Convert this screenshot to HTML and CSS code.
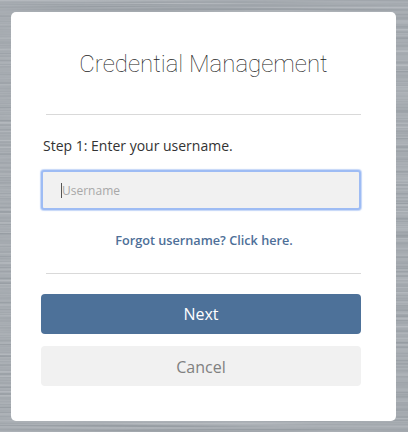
FILE: index.html
```html
<!DOCTYPE html>
<html lang="en">
<head>
  <meta charset="UTF-8" />
  <meta name="viewport" content="width=device-width, initial-scale=1" />
  <title>Credential Management</title>
  <link rel="stylesheet" href="styles.css">
</head>
<body>

  <svg class="metal" xmlns="http://www.w3.org/2000/svg" width="408" height="432">
    <filter id="brushed" x="0" y="0" width="100%" height="100%">
      <feTurbulence type="fractalNoise" baseFrequency="0.003 0.45" numOctaves="3" seed="4" />
      <feColorMatrix type="matrix" values="0 0 0 0 0.66  0 0 0 0 0.68  0 0 0 0 0.71  0.9 0 0 0 -0.2" />
    </filter>
    <rect width="408" height="432" fill="#979da3" />
    <rect width="408" height="432" filter="url(#brushed)" />
  </svg>

  <div class="card">
    <h1 class="title">Credential Management</h1>
    <hr class="rule">
    <p class="step">Step 1: Enter your username.</p>
    <div class="field">
      <input class="field__input" type="text" placeholder="Username">
      <span class="field__caret"></span>
    </div>
    <a class="forgot" href="#">Forgot username? Click here.</a>
    <hr class="rule">
    <button class="btn btn--next" type="button">Next</button>
    <button class="btn btn--cancel" type="button">Cancel</button>
  </div>

</body>
</html>
```

FILE: styles.css
```css
html, body {
  margin: 0;
  padding: 0;
  height: 100%;
}

body {
  padding: 12px 12px 11px 11px;
  box-sizing: border-box;
  font-family: "Open Sans", "Noto Sans", sans-serif;
  background-color: #a0a6ac;
  overflow: hidden;
}

.metal {
  position: fixed;
  top: 0;
  left: 0;
}

.card {
  position: relative;
  display: flex;
  flex-direction: column;
  height: 409px;
  box-sizing: border-box;
  padding: 0 35px 0 30px;
  background: #fff;
  border-radius: 5px;
}

.title {
  margin: 36px 0 0;
  height: 66px;
  line-height: 32px;
  font-family: Roboto, sans-serif;
  font-size: 24px;
  font-weight: 100;
  text-align: center;
  color: #222;
  padding-left: 5px;
}

.rule {
  width: 315px;
  margin: 0 0 0 5px;
  border: 0;
  border-top: 1px solid #d9d9d9;
}

.step {
  margin: 21px 0 14px 2px;
  line-height: 20px;
  font-size: 14px;
  color: #333;
}

.field {
  position: relative;
  height: 40px;
}

.field__input {
  display: block;
  width: 100%;
  height: 100%;
  box-sizing: border-box;
  padding: 0 20px 0 19px;
  border: 2px solid #9ebcf4;
  border-radius: 3px;
  outline: 0;
  background: #f1f1f1;
  box-shadow: 0 0 1px 1px rgba(158, 188, 244, 0.6);
  font-family: "Open Sans", "Noto Sans", sans-serif;
  font-size: 12px;
}

.field__input::placeholder {
  color: #a8a8a8;
  opacity: 1;
}

.field__caret {
  position: absolute;
  left: 20px;
  top: 13px;
  width: 1px;
  height: 15px;
  background: #555;
}

.forgot {
  margin: 20px 0 23px 6px;
  line-height: 20px;
  font-size: 12.7px;
  font-weight: 600;
  text-align: center;
  text-decoration: none;
  color: #4e6f98;
}

.btn {
  display: block;
  width: 100%;
  height: 40px;
  flex: none;
  padding: 0;
  border: 0;
  border-radius: 4px;
  font-family: "Open Sans", "Noto Sans", sans-serif;
  font-size: 16px;
}

.btn--next {
  margin-top: 20px;
  background: #4d7199;
  color: #fff;
}

.btn--cancel {
  margin-top: 12px;
  padding-top: 1px;
  background: #f1f1f1;
  color: #808080;
}
```
